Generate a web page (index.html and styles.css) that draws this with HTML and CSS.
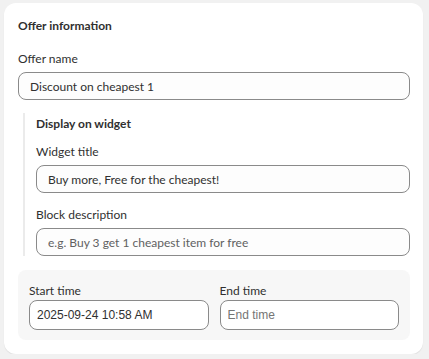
FILE: index.html
```html
<!DOCTYPE html>
<html>
<head>
    <meta charset="utf-8" />
    <title>Offer information</title>
    <link rel="stylesheet" href="styles.css">
</head>
<body>
    <div class="card">
        <h2 class="card-title">Offer information</h2>

        <div class="field">
            <label class="label" for="offer-name">Offer name</label>
            <input class="text-input" id="offer-name" type="text" value="Discount on cheapest 1">
        </div>

        <div class="widget-section">
            <h3 class="section-title">Display on widget</h3>

            <div class="field">
                <label class="label" for="widget-title">Widget title</label>
                <input class="text-input" id="widget-title" type="text" value="Buy more, Free for the cheapest!">
            </div>

            <div class="field">
                <label class="label" for="block-desc">Block description</label>
                <input class="text-input" id="block-desc" type="text" placeholder="e.g. Buy 3 get 1 cheapest item for free">
            </div>
        </div>

        <div class="time-box">
            <div class="time-field">
                <label class="label small" for="start-time">Start time</label>
                <input class="time-input" id="start-time" type="text" value="2025-09-24 10:58 AM">
            </div>
            <div class="time-field">
                <label class="label small" for="end-time">End time</label>
                <input class="time-input" id="end-time" type="text" placeholder="End time">
            </div>
        </div>
    </div>
</body>
</html>
```

FILE: styles.css
```css
body {
    margin: 0;
    background-color: #f1f1f1;
    font-family: Lato, "Open Sans", sans-serif;
    font-size: 12px;
    color: #303030;
}

.card {
    margin: 3px 0 0 4px;
    width: 419px;
    box-sizing: border-box;
    padding: 13px 13px 14px 14px;
    background-color: #fff;
    border-radius: 12px;
    box-shadow: 0 1px 1px rgba(0, 0, 0, 0.08);
}

.card-title {
    margin: 0 0 13px 0;
    font-size: 12px;
    font-weight: 700;
    line-height: 20px;
}

.field {
    display: flex;
    flex-direction: column;
}

.label {
    line-height: 20px;
    margin-bottom: 3px;
}

.label.small {
    line-height: 16px;
    margin-bottom: 1px;
}

.text-input {
    height: 28px;
    box-sizing: border-box;
    margin: 0;
    padding: 0 11px;
    border: 1px solid #8a8a8a;
    border-radius: 8px;
    background-color: #fdfdfd;
    font-family: Lato, "Open Sans", sans-serif;
    font-size: 12px;
    color: #303030;
}

.text-input::placeholder {
    color: #616161;
}

.widget-section {
    margin: 13px 0 0 5px;
    padding-left: 11px;
    border-left: 2px solid #ebebeb;
    display: flex;
    flex-direction: column;
}

.section-title {
    margin: 0 0 7px 0;
    font-size: 12px;
    font-weight: 700;
    line-height: 22px;
}

.widget-section .field + .field {
    margin-top: 12px;
}

.time-box {
    margin-top: 14px;
    padding: 13px 11px 10px 11px;
    background-color: #f7f7f7;
    border-radius: 8px;
    display: grid;
    grid-template-columns: 1fr 1fr;
    gap: 11px;
}

.time-field {
    display: flex;
    flex-direction: column;
    min-width: 0;
}

.time-input {
    width: 100%;
    height: 30px;
    box-sizing: border-box;
    margin: 0;
    padding: 0 7px;
    border: 1px solid #8a8a8a;
    border-radius: 8px;
    background-color: #fff;
    font-family: "Liberation Sans", Arial, sans-serif;
    font-size: 12px;
    color: #303030;
}

.time-input::placeholder {
    color: #757575;
}
```
